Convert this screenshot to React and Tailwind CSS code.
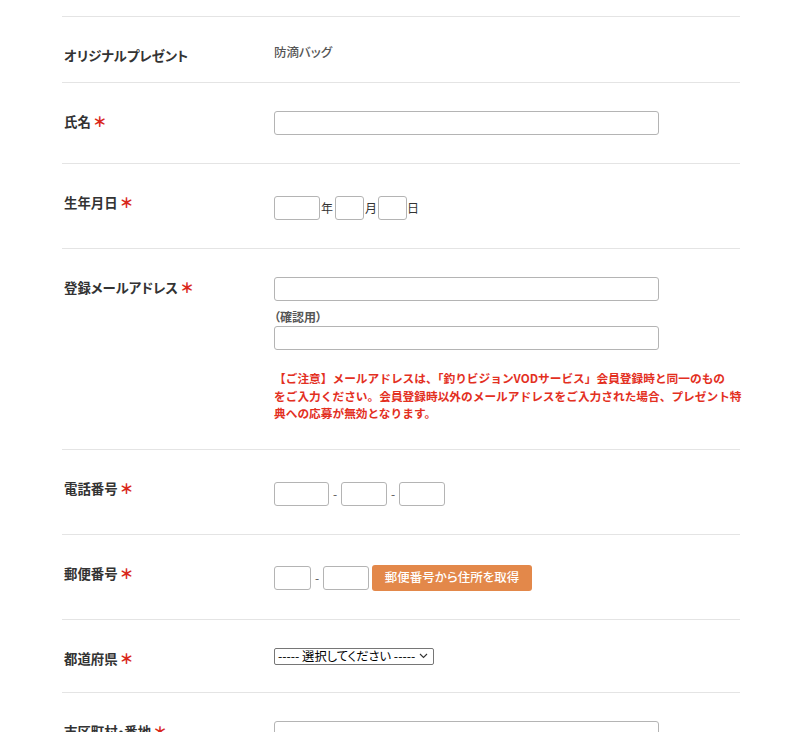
import React from "react";

const Req = () => (
  <span className="ml-[2px] text-[14px] font-black leading-none text-[#d9281c] [font-feature-settings:normal]">＊</span>
);

const Input = ({ w }) => (
  <div className={`h-[24px] ${w} rounded-[3px] border border-[#b4b4b4] bg-white`} />
);

const Row = ({ label, req = true, children, vcls }) => (
  <div className="flex border-t border-[#e4e4e4]">
    <div className="w-[212px] shrink-0 pl-[2px] pt-[28px] text-[13.4px] font-bold leading-[20px] text-[#333]">
      {label}
      {req && <Req />}
    </div>
    <div className={`flex-1 ${vcls}`}>{children}</div>
  </div>
);

export default function App() {
  return (
    <div className="min-h-screen bg-white font-['Noto_Sans_CJK_JP','Noto_Sans',sans-serif] [font-feature-settings:'palt']">
      <div className="ml-[62px] w-[678px] pt-[16px]">
        <Row label="オリジナルプレゼント" req={false} vcls="pt-[25px] pb-[20px]">
          <div className="text-[12.5px] font-medium leading-[20px] text-[#555]">防滴バッグ</div>
        </Row>

        <Row label="氏名" vcls="pt-[28px] pb-[28px]">
          <Input w="w-[385px]" />
        </Row>

        <Row label="生年月日" vcls="pt-[32px] pb-[28px]">
          <div className="flex items-center text-[12px] text-[#333]">
            <Input w="w-[46px]" />
            <span className="ml-px mr-[2px] w-[12px]">年</span>
            <Input w="w-[29px]" />
            <span className="ml-px mr-px w-[12px]">月</span>
            <Input w="w-[29px]" />
            <span className="ml-0 w-[12px]">日</span>
          </div>
        </Row>

        <Row label="登録メールアドレス" vcls="pt-[28px] pb-[27px]">
          <Input w="w-[385px]" />
          <div className="mt-[7px] text-[12px] font-bold leading-[18px] text-[#555]">（確認用）</div>
          <Input w="w-[385px]" />
          <p className="mt-[19px] whitespace-nowrap text-[11.7px] font-bold leading-[17.5px] text-[#e3301f] [font-feature-settings:normal]">
            【ご注意】メールアドレスは、「釣りビジョンVODサービス」会員登録時と同一のもの
            <br />
            をご入力ください。会員登録時以外のメールアドレスをご入力された場合、プレゼント特
            <br />
            典への応募が無効となります。
          </p>
        </Row>

        <Row label="電話番号" vcls="pt-[32px] pb-[28px]">
          <div className="flex items-center text-[12px] text-[#555]">
            <Input w="w-[55px]" />
            <span className="w-[12px] text-center">-</span>
            <Input w="w-[46px]" />
            <span className="w-[12px] text-center">-</span>
            <Input w="w-[46px]" />
          </div>
        </Row>

        <Row label="郵便番号" vcls="pt-[30px] pb-[28px]">
          <div className="flex items-center text-[12px] text-[#555]">
            <Input w="w-[37px]" />
            <span className="w-[12px] text-center">-</span>
            <Input w="w-[46px]" />
            <button className="ml-[3px] h-[26px] w-[160px] rounded-[3px] bg-[#e3884a] text-[12.5px] font-medium text-white">
              郵便番号から住所を取得
            </button>
          </div>
        </Row>

        <Row label="都道府県" vcls="pt-[28px] pb-[27px]">
          <div className="flex h-[17px] w-[160px] items-center justify-between rounded-[2px] border border-[#767676] pl-[3px] pr-[5px] text-[12.3px] leading-none text-black">
            <span>----- 選択してください -----</span>
            <svg width="9" height="6" viewBox="0 0 9 6" fill="none">
              <path d="M1 1l3.5 3.5L8 1" stroke="#333" strokeWidth="1.1" />
            </svg>
          </div>
        </Row>

        <Row label="市区町村・番地" vcls="pt-[28px] pb-[28px]">
          <Input w="w-[385px]" />
        </Row>
      </div>
    </div>
  );
}
